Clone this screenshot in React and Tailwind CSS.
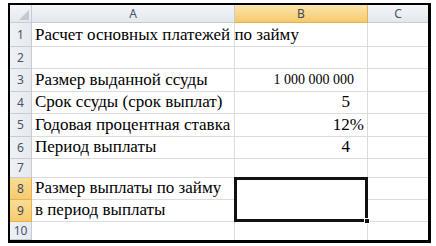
import React from "react";

function RowHdr({ n, sel }) {
  return (
    <div
      className={
        "flex items-center justify-center border-r border-b text-[12px] font-['Noto_Sans',sans-serif] " +
        (sel
          ? "bg-gradient-to-b from-[#f9dc95] to-[#f5cb6f] border-[#e6b14a] text-[#3d4a5c]"
          : "bg-gradient-to-r from-[#eef1f5] to-[#e6eaef] border-[#c6ccd4] text-[#44546a]")
      }
    >
      {n}
    </div>
  );
}

function Cell({ children, right, size = "text-[17px]", cls = "" }) {
  return (
    <div
      className={
        "flex items-end border-r border-b border-[#dcdcdc] bg-white whitespace-nowrap overflow-visible leading-[18px] text-black pb-[2px] font-['Liberation_Serif',serif] " +
        size +
        " " +
        (right ? "justify-end " : "pl-[3px] ") +
        cls
      }
    >
      {children}
    </div>
  );
}

export default function App() {
  return (
    <div className="w-[436px] h-[246px] bg-white pt-[3px] pl-[8px]">
      <div className="w-[423px] border-t-2 border-l-2 border-r-[3px] border-b-[3px] border-black">
        <div className="grid grid-cols-[22px_203px_133px_60px] grid-rows-[18px_24px_22px_23px_22px_23px_22px_19px_22px_22px_18px]">
          <div className="relative border-r border-b border-[#c6ccd4] bg-gradient-to-b from-[#f3f5f8] to-[#e4e8ed]">
            <svg className="absolute right-[2px] bottom-[2px]" width="10" height="10" viewBox="0 0 10 10">
              <polygon points="10,0 10,10 0,10" fill="#c3c9d1" />
            </svg>
          </div>
          <div className="flex items-center justify-center border-r border-b border-[#c6ccd4] bg-gradient-to-b from-[#f3f5f8] to-[#e4e8ed] text-[12px] text-[#44546a] font-['Noto_Sans',sans-serif]">
            A
          </div>
          <div className="flex items-center justify-center border-r border-b border-[#e6b14a] bg-gradient-to-b from-[#fbe5ad] to-[#f6c96a] text-[12px] text-[#3d4a5c] font-['Noto_Sans',sans-serif]">
            B
          </div>
          <div className="flex items-center justify-center border-b border-[#c6ccd4] bg-gradient-to-b from-[#f3f5f8] to-[#e4e8ed] text-[12px] text-[#44546a] font-['Noto_Sans',sans-serif]">
            C
          </div>

          <RowHdr n="1" />
          <Cell cls="relative z-10">Расчет основных платежей по займу</Cell>
          <Cell />
          <Cell cls="border-r-0" />

          <RowHdr n="2" />
          <Cell />
          <Cell />
          <Cell cls="border-r-0" />

          <RowHdr n="3" />
          <Cell>Размер выданной ссуды</Cell>
          <Cell right size="text-[14px]" cls="pr-[13px]">1 000 000 000</Cell>
          <Cell cls="border-r-0" />

          <RowHdr n="4" />
          <Cell>Срок ссуды (срок выплат)</Cell>
          <Cell right cls="pr-[17px]">5</Cell>
          <Cell cls="border-r-0" />

          <RowHdr n="5" />
          <Cell>Годовая процентная ставка</Cell>
          <Cell right cls="pr-[3px]">12%</Cell>
          <Cell cls="border-r-0" />

          <RowHdr n="6" />
          <Cell>Период выплаты</Cell>
          <Cell right cls="pr-[17px]">4</Cell>
          <Cell cls="border-r-0" />

          <RowHdr n="7" />
          <Cell />
          <Cell />
          <Cell cls="border-r-0" />

          <RowHdr n="8" sel />
          <Cell>Размер выплаты по займу</Cell>
          <div className="row-span-2 relative border-b border-r border-[#dcdcdc] bg-white">
            <div className="absolute -left-[1px] -top-[1px] -right-[1px] -bottom-[1px] border-[3px] border-[#111]" />
            <div className="absolute -right-[3px] -bottom-[3px] w-[6px] h-[6px] bg-[#111] border border-white" />
          </div>
          <Cell cls="border-r-0" />

          <RowHdr n="9" sel />
          <Cell>в период выплаты</Cell>
          <Cell cls="border-r-0" />

          <RowHdr n="10" />
          <Cell cls="border-b-0" />
          <Cell cls="border-b-0" />
          <Cell cls="border-r-0 border-b-0" />
        </div>
      </div>
    </div>
  );
}
